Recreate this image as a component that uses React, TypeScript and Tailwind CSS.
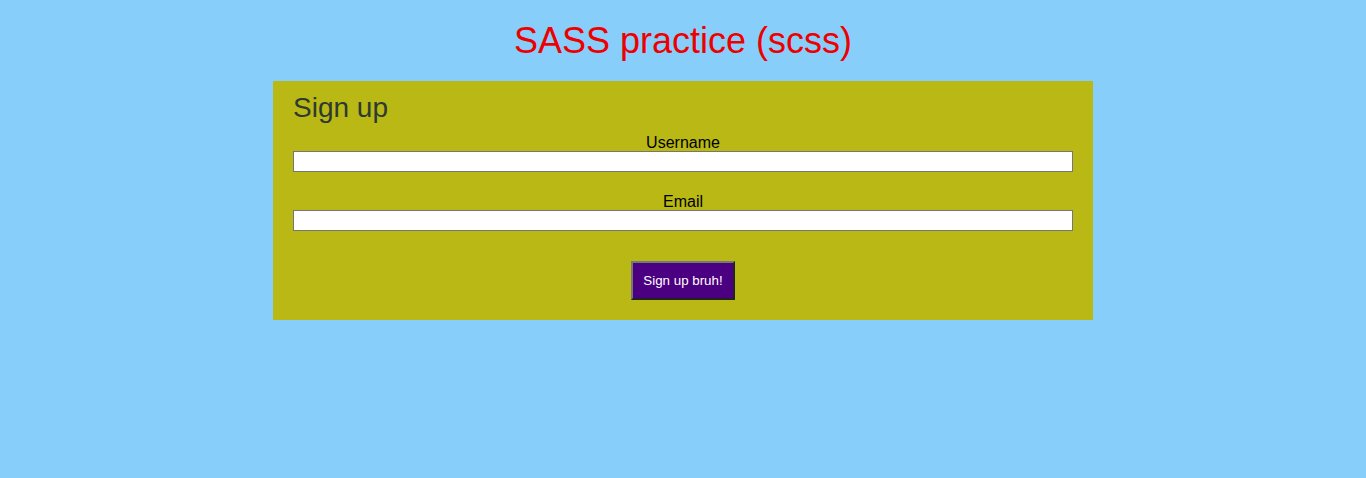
import React from "react";

export default function App() {
  return (
    <div className="min-h-[478px] w-full bg-[#87cefa] font-['Liberation_Sans',Arial,sans-serif]">
      <h1 className="pt-[20px] pb-[19px] text-center text-[36px] leading-[42px] text-[#ee0000]">
        SASS practice (scss)
      </h1>
      <div className="mx-auto w-[820px] bg-[#b9b814] px-5 pt-[11px] pb-5">
        <h2 className="text-[28px] leading-[32px] text-[#2d3a33]">Sign up</h2>
        <div className="mt-[10px] flex flex-col">
          <label className="text-center text-[16px] leading-[17px] text-black">Username</label>
          <input
            type="text"
            className="h-[21px] w-full border border-[#767676] bg-white px-[2px] text-[13px]"
          />
        </div>
        <div className="mt-[21px] flex flex-col">
          <label className="text-center text-[16px] leading-[17px] text-black">Email</label>
          <input
            type="text"
            className="h-[21px] w-full border border-[#767676] bg-white px-[2px] text-[13px]"
          />
        </div>
        <div className="mt-[30px] flex justify-center">
          <button className="h-[39px] w-[104px] border-2 border-t-[#777] border-l-[#777] border-r-[#222] border-b-[#222] bg-[#4b0082] text-[13.333px] text-white">
            Sign up bruh!
          </button>
        </div>
      </div>
    </div>
  );
}
